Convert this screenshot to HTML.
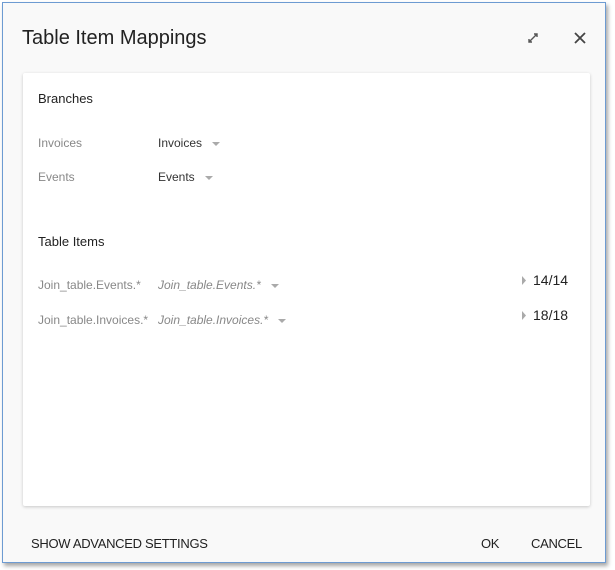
<!DOCTYPE html>
<html><head><style>
body{margin:0;width:615px;height:570px;background:#fff;font-family:"Liberation Sans",Arial,sans-serif;position:relative;overflow:hidden}
.dlg{position:absolute;left:2px;top:2px;width:602px;height:559px;background:#f9f9f9;border:1px solid #6d9bd2;box-shadow:2px 3px 4px rgba(0,0,0,.35)}
.t{position:absolute;font-size:12px;color:#888;white-space:nowrap}
.d{color:#333}
.i{font-style:italic;color:#888}
.car{display:inline-block;width:0;height:0;border-left:4px solid transparent;border-right:4px solid transparent;border-top:4px solid #aaa;vertical-align:middle;margin-left:10px}
.card{position:absolute;left:23px;top:73px;width:567px;height:433px;background:#fff;border-radius:2px;box-shadow:0 1px 3px rgba(0,0,0,.2)}
.btn{position:absolute;font-size:13px;color:#222;top:536px;letter-spacing:-0.3px}
</style></head><body>
<div class="dlg"></div>
<div style="position:absolute;left:22px;top:27px;font-size:20px;color:#222">Table Item Mappings</div>
<svg style="position:absolute;left:527px;top:32px" width="12" height="12" viewBox="0 0 12 12"><path d="M2 10L10 2M7 2h3v3M2 7v3h3" stroke="#555" stroke-width="1.4" fill="none"/></svg>
<svg style="position:absolute;left:573px;top:31px" width="14" height="14" viewBox="0 0 14 14"><path d="M2 2L12 12M12 2L2 12" stroke="#444" stroke-width="1.8"/></svg>
<div class="card"></div>
<div class="t d" style="left:38px;top:91px;font-size:13px;color:#222">Branches</div>
<div class="t" style="left:38px;top:136px">Invoices</div>
<div class="t d" style="left:158px;top:136px">Invoices<span class="car"></span></div>
<div class="t" style="left:38px;top:170px">Events</div>
<div class="t d" style="left:158px;top:170px">Events<span class="car"></span></div>
<div class="t d" style="left:38px;top:234px;font-size:13px;color:#222">Table Items</div>
<div class="t" style="left:38px;top:278px">Join_table.Events.*</div>
<div class="t i" style="left:158px;top:278px">Join_table.Events.*<span class="car"></span></div>
<div class="t" style="left:38px;top:313px">Join_table.Invoices.*</div>
<div class="t i" style="left:158px;top:313px">Join_table.Invoices.*<span class="car"></span></div>
<svg style="position:absolute;left:521px;top:276px" width="6" height="9"><path d="M1 0L5 4.5L1 9Z" fill="#aaa"/></svg>
<div class="t d" style="left:533px;top:272px;font-size:14px;color:#222">14/14</div>
<svg style="position:absolute;left:521px;top:311px" width="6" height="9"><path d="M1 0L5 4.5L1 9Z" fill="#aaa"/></svg>
<div class="t d" style="left:533px;top:307px;font-size:14px;color:#222">18/18</div>
<div class="btn" style="left:31px">SHOW ADVANCED SETTINGS</div>
<div class="btn" style="left:481px">OK</div>
<div class="btn" style="left:531px">CANCEL</div>
</body></html>
